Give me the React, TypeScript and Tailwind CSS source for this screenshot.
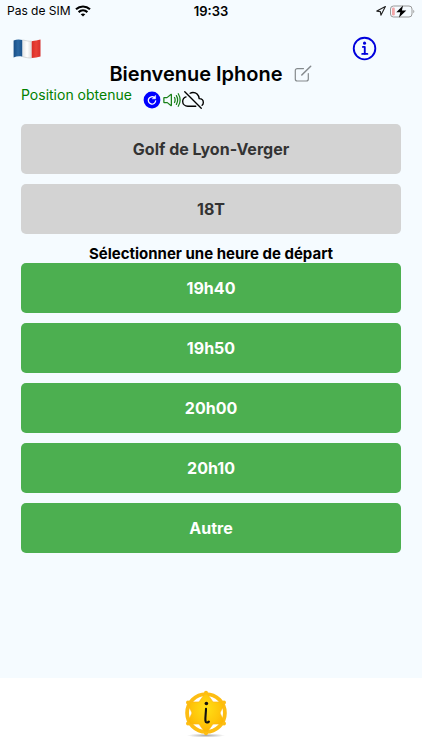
import {
  IoCloudOfflineOutline,
  IoInformationCircleOutline,
  IoVolumeHighOutline,
} from "react-icons/io5";

const departures = ["19h40", "19h50", "20h00", "20h10", "Autre"];

function WifiIcon() {
  return (
    <svg viewBox="0 0 16 12" className="h-[12px] w-4" fill="none" stroke="#000" strokeWidth="2.1" aria-hidden="true">
      <path d="M1 4.3C5 .5 11 .5 15 4.3" />
      <path d="M3.6 7.1c2.6-2.3 6.2-2.3 8.8 0" />
      <path d="M8 11.6 5.7 9.2c1.3-1.1 3.3-1.1 4.6 0Z" fill="#000" stroke="none" />
    </svg>
  );
}

function LocationIcon() {
  return (
    <svg viewBox="0 0 10 10" className="size-[10px]" fill="none" stroke="#222" strokeWidth="1.1" strokeLinejoin="round" aria-hidden="true">
      <path d="M9.4.6.8 5.1l3.6.5.5 3.6Z" />
    </svg>
  );
}

function BatteryIcon() {
  return (
    <svg viewBox="0 0 25 13" className="h-[13px] w-[25px]" aria-hidden="true">
      <rect x=".5" y="1" width="21.5" height="11" rx="3" fill="none" stroke="#999" />
      <rect x="2" y="2.5" width="2.8" height="8" rx="1.2" fill="#f3a7a9" />
      <path d="M23.3 4.7c1.4.6 1.4 3 0 3.6Z" fill="#999" />
      <path d="M13 .4 6.3 7.3h4L9 12.6l7.3-7h-4.4Z" fill="#000" />
    </svg>
  );
}

function FrenchFlag() {
  return (
    <svg viewBox="0 0 28 20" className="h-5 w-7" aria-hidden="true">
      <defs>
        <linearGradient id="flagBlue" x1="0" x2="1">
          <stop stopColor="#174d85" />
          <stop offset=".5" stopColor="#2b68a3" />
          <stop offset="1" stopColor="#1a5088" />
        </linearGradient>
        <linearGradient id="flagWhite" x1="0" x2="1">
          <stop stopColor="#e4e4e4" />
          <stop offset=".5" stopColor="#fff" />
          <stop offset="1" stopColor="#dadada" />
        </linearGradient>
        <linearGradient id="flagRed" x1="0" x2="1">
          <stop stopColor="#d82c27" />
          <stop offset=".5" stopColor="#ea4136" />
          <stop offset="1" stopColor="#d62e2c" />
        </linearGradient>
      </defs>
      <path d="M.6 1.5C3.5.1 6.5.2 9.5.9v16.8c-3-.7-6-.5-8.9.9Z" fill="url(#flagBlue)" />
      <path d="M9.5.9c3.5.8 6 1.5 9.2 1.3V19c-3.2.2-5.7-.5-9.2-1.3Z" fill="url(#flagWhite)" />
      <path d="M18.7 2.2c3.4-.2 5.8-1 8.8-1.6v17c-3 .6-5.4 1.3-8.8 1.4Z" fill="url(#flagRed)" />
      <path d="M9.5.9c3.5.8 6 1.5 9.2 1.3M9.5 17.7c3.5.8 6 1.5 9.2 1.3" fill="none" stroke="#c4c4c4" strokeWidth=".6" />
    </svg>
  );
}

function EditIcon() {
  return (
    <svg viewBox="0 0 20 20" className="size-5" fill="none" stroke="#858a8d" strokeWidth="1.2" strokeLinecap="round" aria-hidden="true">
      <path d="M10.5 4.6H4.3a2 2 0 0 0-2 2V15a2 2 0 0 0 2 2h9a2 2 0 0 0 2-2V9.5" />
      <path d="m8.8 11 8.9-8.8" strokeWidth="1.5" />
    </svg>
  );
}

function ReloadIcon() {
  return (
    <svg viewBox="0 0 20 20" className="size-5" fill="none" stroke="#fff" strokeWidth="1.3" strokeLinecap="round" aria-hidden="true">
      <circle cx="10" cy="10" r="8.4" fill="#0000ff" stroke="none" />
      <path d="M12.4 7.6a3.7 3.7 0 1 0 1.3 3.2" />
      <path d="M13.6 5.6v3.2h-3.2Z" fill="#fff" strokeWidth=".5" strokeLinejoin="round" />
    </svg>
  );
}

function StarBadge() {
  return (
    <svg viewBox="0 0 46 50" className="h-[50px] w-[46px]" aria-hidden="true">
      <defs>
        <radialGradient id="gold" cx=".5" cy=".4" r=".6">
          <stop stopColor="#ffe016" />
          <stop offset=".6" stopColor="#ffc60a" />
          <stop offset="1" stopColor="#fbb000" />
        </radialGradient>
        <radialGradient id="shade">
          <stop stopColor="#aaa" />
          <stop offset="1" stopColor="#aaa" stopOpacity="0" />
        </radialGradient>
      </defs>
      <ellipse cx="23" cy="46.5" rx="19" ry="2" fill="url(#shade)" />
      <circle cx="23" cy="24" r="18.9" fill="#fff" stroke="#fdbd13" strokeWidth="3.8" />
      <path
        d="m23 3 7 10h12L37 24l5 11H30l-7 10-7-10H4l5-11L4 13h12Z"
        fill="url(#gold)"
        stroke="#fcb813"
        strokeWidth=".7"
        strokeLinejoin="round"
      />
      <g fill="#fdbd13">
        <circle cx="23" cy="3.8" r="2" />
        <circle cx="23" cy="44.2" r="2" />
        <circle cx="5" cy="13.6" r="2" />
        <circle cx="41" cy="13.6" r="2" />
        <circle cx="5" cy="34.4" r="2" />
        <circle cx="41" cy="34.4" r="2" />
      </g>
      <circle cx="23.4" cy="14.5" r="1.8" fill="#111" />
      <path d="M23 19.8c-.1 4.3-.8 8.6-.6 11.9.2 2.4 2 2.2 3.5.9" fill="none" stroke="#111" strokeWidth="2.1" strokeLinecap="round" />
    </svg>
  );
}

export default function App() {
  return (
    <div className="flex min-h-screen flex-col bg-[#f5fbff] font-['Inter','Liberation_Sans',sans-serif] text-black">
      <div className="grid h-[22px] grid-cols-3 items-center px-[7px] text-xs leading-4">
        <div className="flex items-center gap-1 whitespace-nowrap">
          <span>Pas de SIM</span>
          <WifiIcon />
        </div>
        <span className="text-center text-[13px] font-semibold">19:33</span>
        <div className="flex items-center justify-end gap-1">
          <LocationIcon />
          <BatteryIcon />
        </div>
      </div>

      <main className="flex flex-1 flex-col">
        <header>
          <div className="flex h-10 items-center justify-between pt-[14px] pr-[42px] pl-[13px]">
            <button type="button" aria-label="Changer de langue">
              <FrenchFlag />
            </button>
            <button type="button" aria-label="Informations">
              <IoInformationCircleOutline className="size-[30px] text-[#0000dd]" />
            </button>
          </div>
          <div className="flex h-6 items-center justify-center gap-[10px]">
            <h1 className="text-xl leading-6 font-semibold">Bienvenue Iphone</h1>
            <button type="button" aria-label="Modifier le nom">
              <EditIcon />
            </button>
          </div>
          <div className="flex h-[38px] gap-[10px] px-[21px]">
            <p className="text-sm leading-[18px] text-[#008000]">Position obtenue</p>
            <div className="flex h-7 items-center">
              <button type="button" aria-label="Actualiser la position">
                <ReloadIcon />
              </button>
              <button type="button" aria-label="Son">
                <IoVolumeHighOutline className="size-5 text-[#188018]" />
              </button>
              <IoCloudOfflineOutline className="size-[22px]" />
            </div>
          </div>
        </header>

        <div className="flex flex-col gap-[10px] px-[21px]">
          <button type="button" className="h-[50px] rounded-[5px] bg-[#d3d3d3] text-base font-bold text-[#333]">
            Golf de Lyon-Verger
          </button>
          <button type="button" className="h-[50px] rounded-[5px] bg-[#d3d3d3] text-base font-bold text-[#333]">
            18T
          </button>
        </div>

        <h2 className="pt-[10px] text-center text-[15px] leading-[19px] font-bold">Sélectionner une heure de départ</h2>

        <div className="flex flex-col gap-[10px] px-[21px] pb-5">
          {departures.map((time) => (
            <button key={time} type="button" className="h-[50px] rounded-[5px] bg-[#4caf50] text-base font-bold text-white">
              {time}
            </button>
          ))}
        </div>
      </main>

      <footer className="flex h-[72px] items-center justify-center bg-white pr-[10px]">
        <button type="button" aria-label="Accueil">
          <StarBadge />
        </button>
      </footer>
    </div>
  );
}
